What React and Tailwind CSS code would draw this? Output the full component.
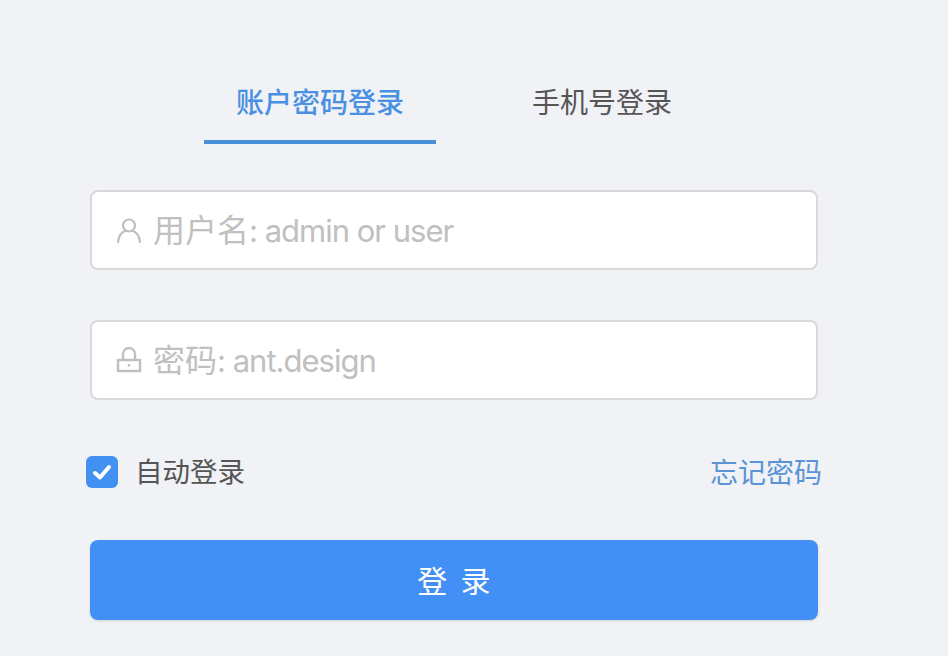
import React from "react";

const fontStack = "[font-family:Inter,'Noto_Sans_CJK_SC',sans-serif]";

const UserIcon = () => (
  <svg viewBox="0 0 26 26" className="w-[26px] h-[26px] shrink-0" fill="none" stroke="#bfbfbf" strokeWidth="2.2">
    <circle cx="13" cy="8.5" r="6" />
    <path d="M2 25c.6-6 3.8-10 7.4-11.3M24 25c-.6-6-3.8-10-7.4-11.3" strokeLinecap="round" />
  </svg>
);

const LockIcon = () => (
  <svg viewBox="0 0 26 26" className="w-[26px] h-[26px] shrink-0" fill="none" stroke="#bfbfbf" strokeWidth="2.4">
    <rect x="2" y="13" width="22" height="11" />
    <path d="M7 13V7a6 6 0 0 1 12 0v6" />
    <path d="M13 17v2.5" />
  </svg>
);

const Field = ({ icon, label, hint }) => (
  <div className="w-[728px] h-20 flex items-center gap-[11px] pl-[24px] pr-4 bg-white border-2 border-[#d9d9d9] rounded-lg text-[#c0c0c0]">
    {icon}
    <div className="text-[31px] whitespace-nowrap pt-[2px]">
      <span className="text-[32px]">{label}</span>
      <span className="tracking-[-1px]">{hint}</span>
    </div>
  </div>
);

export default function App() {
  return (
    <div className={`w-[948px] h-[656px] overflow-hidden bg-[#f0f2f5] pl-[90px] pt-[80px] ${fontStack}`}>
      <div className="flex ml-[114px] gap-[64px] h-[64px]">
        <div className="px-8 h-full flex items-center pb-[14px] border-b-4 border-[#4a90d9] text-[28px] font-medium text-[#4a90e2]">
          账户密码登录
        </div>
        <div className="px-8 h-full flex items-center pb-[14px] border-b-4 border-transparent text-[28px] text-[#555]">
          手机号登录
        </div>
      </div>

      <div className="mt-[46px] flex flex-col gap-[50px]">
        <Field icon={<UserIcon />} label="用户名" hint=": admin or user" />
        <Field icon={<LockIcon />} label="密码" hint=": ant.design" />
      </div>

      <div className="w-[728px] h-[32px] mt-[56px] flex items-center justify-between">
        <label className="flex items-center gap-[17px] -ml-1 text-[27.5px] text-[#555]">
          <span className="w-8 h-8 rounded-md bg-[#4290f0] flex items-center justify-center">
            <svg viewBox="0 0 24 24" className="w-6 h-6" fill="none" stroke="white" strokeWidth="4" strokeLinecap="round" strokeLinejoin="round">
              <path d="M5 13l5 4.5L19 7" />
            </svg>
          </span>
          <span className="pt-[2px]">自动登录</span>
        </label>
        <a className="text-[28px] text-[#5b94d6] -mr-[4px] pt-[2px]">忘记密码</a>
      </div>

      <button className="w-[728px] h-20 mt-[52px] pt-[2px] pl-[2px] rounded-lg bg-[#4290f5] text-white text-[30px] tracking-[0.08em] shadow-sm">
        登 录
      </button>
    </div>
  );
}
